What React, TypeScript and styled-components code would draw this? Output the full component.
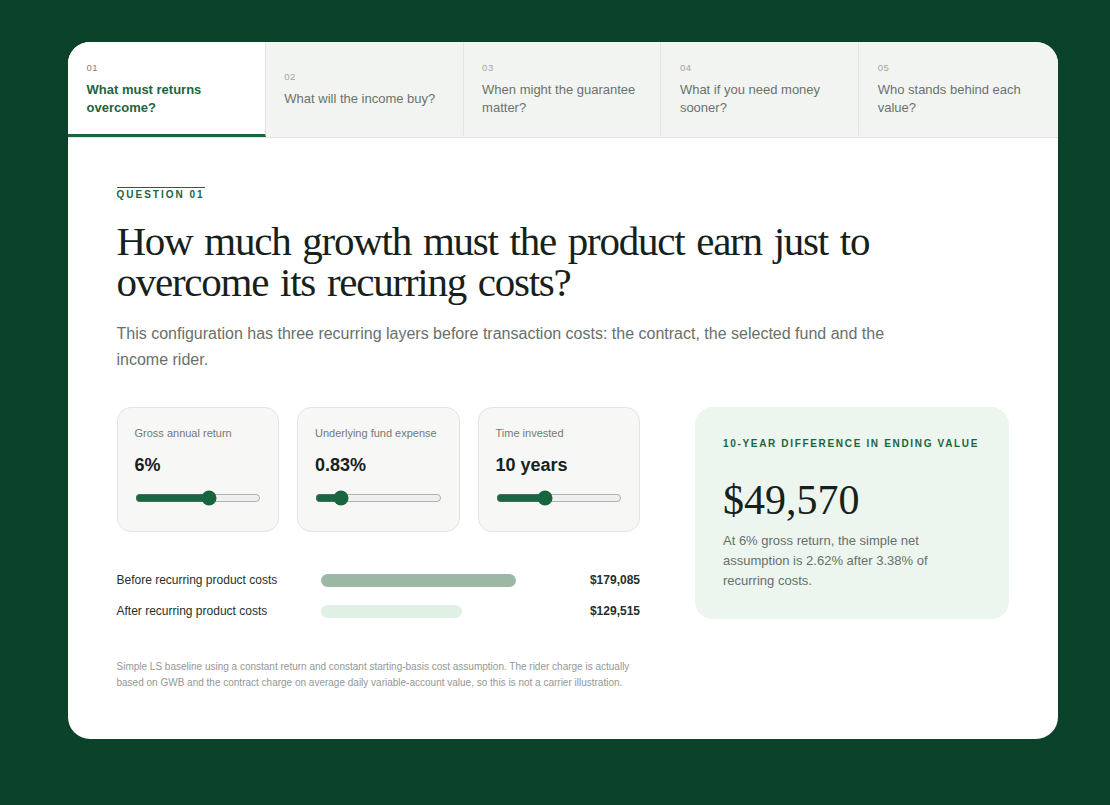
import React, { useState } from "react";
import styled, { createGlobalStyle } from "styled-components";

const GlobalStyle = createGlobalStyle`
  html, body {
    margin: 0;
    padding: 0;
    background: #0b432a;
    font-family: "Liberation Sans", Arial, sans-serif;
  }
  * { box-sizing: border-box; }
`;

const Page = styled.div`
  width: 1110px;
  height: 805px;
  padding: 42px 52px 66px 68px;
`;
const Card = styled.main`
  width: 990px;
  height: 697px;
  background: #fff;
  border-radius: 22px;
  overflow: hidden;
`;
const Tabs = styled.nav`
  display: grid;
  grid-template-columns: repeat(5, 1fr);
  height: 96px;
  padding-right: 1px;
  background: #f2f4f1;
  border-bottom: 1px solid #e1e4e0;
`;
const Tab = styled.div<{ $active?: boolean }>`
  display: flex;
  flex-direction: column;
  justify-content: center;
  gap: 6px;
  padding: 2px 18px 0 18.5px;
  background: ${p => (p.$active ? "#fff" : "transparent")};
  border-right: 1px solid #e1e4e0;
  border-bottom: 3px solid ${p => (p.$active ? "#17663f" : "transparent")};
  &:last-child {
    border-right: none;
  }
`;
const TabNumber = styled.span<{ $active?: boolean }>`
  font-size: 9.5px;
  line-height: 14px;
  letter-spacing: 0.5px;
  color: ${p => (p.$active ? "#7b817d" : "#a0a5a1")};
`;
const TabTitle = styled.span<{ $active?: boolean }>`
  font-size: 13px;
  line-height: 18px;
  font-weight: ${p => (p.$active ? 700 : 400)};
  color: ${p => (p.$active ? "#1c6542" : "#6c726e")};
`;
const Content = styled.section`
  padding: 46px 49px 0 48.5px;
`;
const Eyebrow = styled.div`
  display: inline-block;
  border-top: 1px solid #1c6542;
  font-size: 10px;
  line-height: 13px;
  font-weight: 700;
  letter-spacing: 2px;
  color: #1c6542;
`;
const Heading = styled.h1`
  margin: 19px 0 0;
  width: 800px;
  font-family: "Liberation Serif", Georgia, serif;
  font-size: 41px;
  line-height: 41px;
  font-weight: 400;
  letter-spacing: -1.25px;
  word-spacing: 2.9px;
  color: #17211c;
`;
const Lead = styled.p`
  margin: 18px 0 0;
  width: 790px;
  font-size: 16px;
  line-height: 26px;
  color: #68706b;
`;
const Columns = styled.div`
  display: grid;
  grid-template-columns: 523.5px 314px;
  justify-content: space-between;
  margin-top: 34px;
`;
const Controls = styled.div`
  display: grid;
  grid-template-columns: repeat(3, 1fr);
  gap: 18px;
`;
const Control = styled.label`
  display: block;
  height: 125px;
  padding: 19px 17px 0;
  background: #f7f8f6;
  border: 1px solid #e3e5e2;
  border-radius: 14px;
`;
const ControlLabel = styled.div`
  font-size: 11px;
  line-height: 13px;
  color: #727874;
`;
const ControlValue = styled.div`
  margin-top: 15px;
  font-size: 18px;
  line-height: 21px;
  font-weight: 700;
  color: #18211c;
`;
const Slider = styled.input`
  display: block;
  width: 100%;
  height: 16px;
  margin: 14px 0 0;
  accent-color: #17663f;
`;
const Bars = styled.div`
  display: grid;
  row-gap: 18px;
  margin-top: 41px;
`;
const BarRow = styled.div`
  display: grid;
  grid-template-columns: 204.5px 1fr auto;
  align-items: center;
  height: 13px;
`;
const BarLabel = styled.span`
  font-size: 12px;
  color: #26302b;
`;
const Bar = styled.div<{ $tone: "dark" | "light" }>`
  height: 13px;
  border-radius: 7px;
  background: ${p => (p.$tone === "dark" ? "#9cb8a4" : "#e0f0e5")};
`;
const BarValue = styled.span`
  font-size: 12px;
  font-weight: 700;
  color: #26302b;
`;
const Footnote = styled.p`
  margin: 42px 0 0;
  font-size: 10px;
  line-height: 15.5px;
  color: #939894;
`;
const Result = styled.aside`
  align-self: start;
  height: 212px;
  padding: 30px 28px 0;
  background: #ecf5ee;
  border-radius: 18px;
`;
const ResultLabel = styled.div`
  font-size: 10px;
  line-height: 13px;
  font-weight: 700;
  letter-spacing: 1.67px;
  color: #1c6542;
  white-space: nowrap;
`;
const ResultValue = styled.div`
  margin-top: 27px;
  font-family: "Liberation Serif", Georgia, serif;
  font-size: 42px;
  line-height: 46px;
  font-weight: 400;
  font-variant-numeric: oldstyle-nums;
  color: #17211c;
`;
const ResultText = styled.p`
  margin: 8px 0 0;
  width: 230px;
  font-size: 13px;
  line-height: 20px;
  color: #68706b;
`;

const tabs = [
  "What must returns overcome?",
  "What will the income buy?",
  "When might the guarantee matter?",
  "What if you need money sooner?",
  "Who stands behind each value?"
];

const MAX_VALUE = 179085;
const rows = [
  { label: "Before recurring product costs", value: 179085, tone: "dark" as const },
  { label: "After recurring product costs", value: 129515, tone: "light" as const }
];
const BAR_WIDTH = 195;

export default function App() {
  const [gross, setGross] = useState(6);
  const [expense, setExpense] = useState(0.83);
  const [years, setYears] = useState(10);

  return (
    <Page>
      <GlobalStyle />
      <Card>
        <Tabs>
          {tabs.map((title, i) => (
            <Tab key={title} $active={i === 0}>
              <TabNumber $active={i === 0}>0{i + 1}</TabNumber>
              <TabTitle $active={i === 0}>{title}</TabTitle>
            </Tab>
          ))}
        </Tabs>
        <Content>
          <Eyebrow>QUESTION 01</Eyebrow>
          <Heading>How much growth must the product earn just to overcome its recurring costs?</Heading>
          <Lead>
            This configuration has three recurring layers before transaction costs: the contract, the selected fund and
            the income rider.
          </Lead>
          <Columns>
            <div>
              <Controls>
                <Control>
                  <ControlLabel>Gross annual return</ControlLabel>
                  <ControlValue>{gross}%</ControlValue>
                  <Slider type="range" min={0} max={10} step={1} value={gross} onChange={e => setGross(+e.target.value)} />
                </Control>
                <Control>
                  <ControlLabel>Underlying fund expense</ControlLabel>
                  <ControlValue>{expense}%</ControlValue>
                  <Slider
                    type="range"
                    min={0}
                    max={5}
                    step={0.01}
                    value={expense}
                    onChange={e => setExpense(+e.target.value)}
                  />
                </Control>
                <Control>
                  <ControlLabel>Time invested</ControlLabel>
                  <ControlValue>{years} years</ControlValue>
                  <Slider type="range" min={1} max={25} step={1} value={years} onChange={e => setYears(+e.target.value)} />
                </Control>
              </Controls>
              <Bars>
                {rows.map(row => (
                  <BarRow key={row.label}>
                    <BarLabel>{row.label}</BarLabel>
                    <Bar $tone={row.tone} style={{ width: (row.value / MAX_VALUE) * BAR_WIDTH }} />
                    <BarValue>${row.value.toLocaleString("en-US")}</BarValue>
                  </BarRow>
                ))}
              </Bars>
              <Footnote>
                Simple LS baseline using a constant return and constant starting-basis cost assumption. The rider charge
                is actually based on GWB and the contract charge on average daily variable-account value, so this is not
                a carrier illustration.
              </Footnote>
            </div>
            <Result>
              <ResultLabel>10-YEAR DIFFERENCE IN ENDING VALUE</ResultLabel>
              <ResultValue>$49,570</ResultValue>
              <ResultText>At 6% gross return, the simple net assumption is 2.62% after 3.38% of recurring costs.</ResultText>
            </Result>
          </Columns>
        </Content>
      </Card>
    </Page>
  );
}
